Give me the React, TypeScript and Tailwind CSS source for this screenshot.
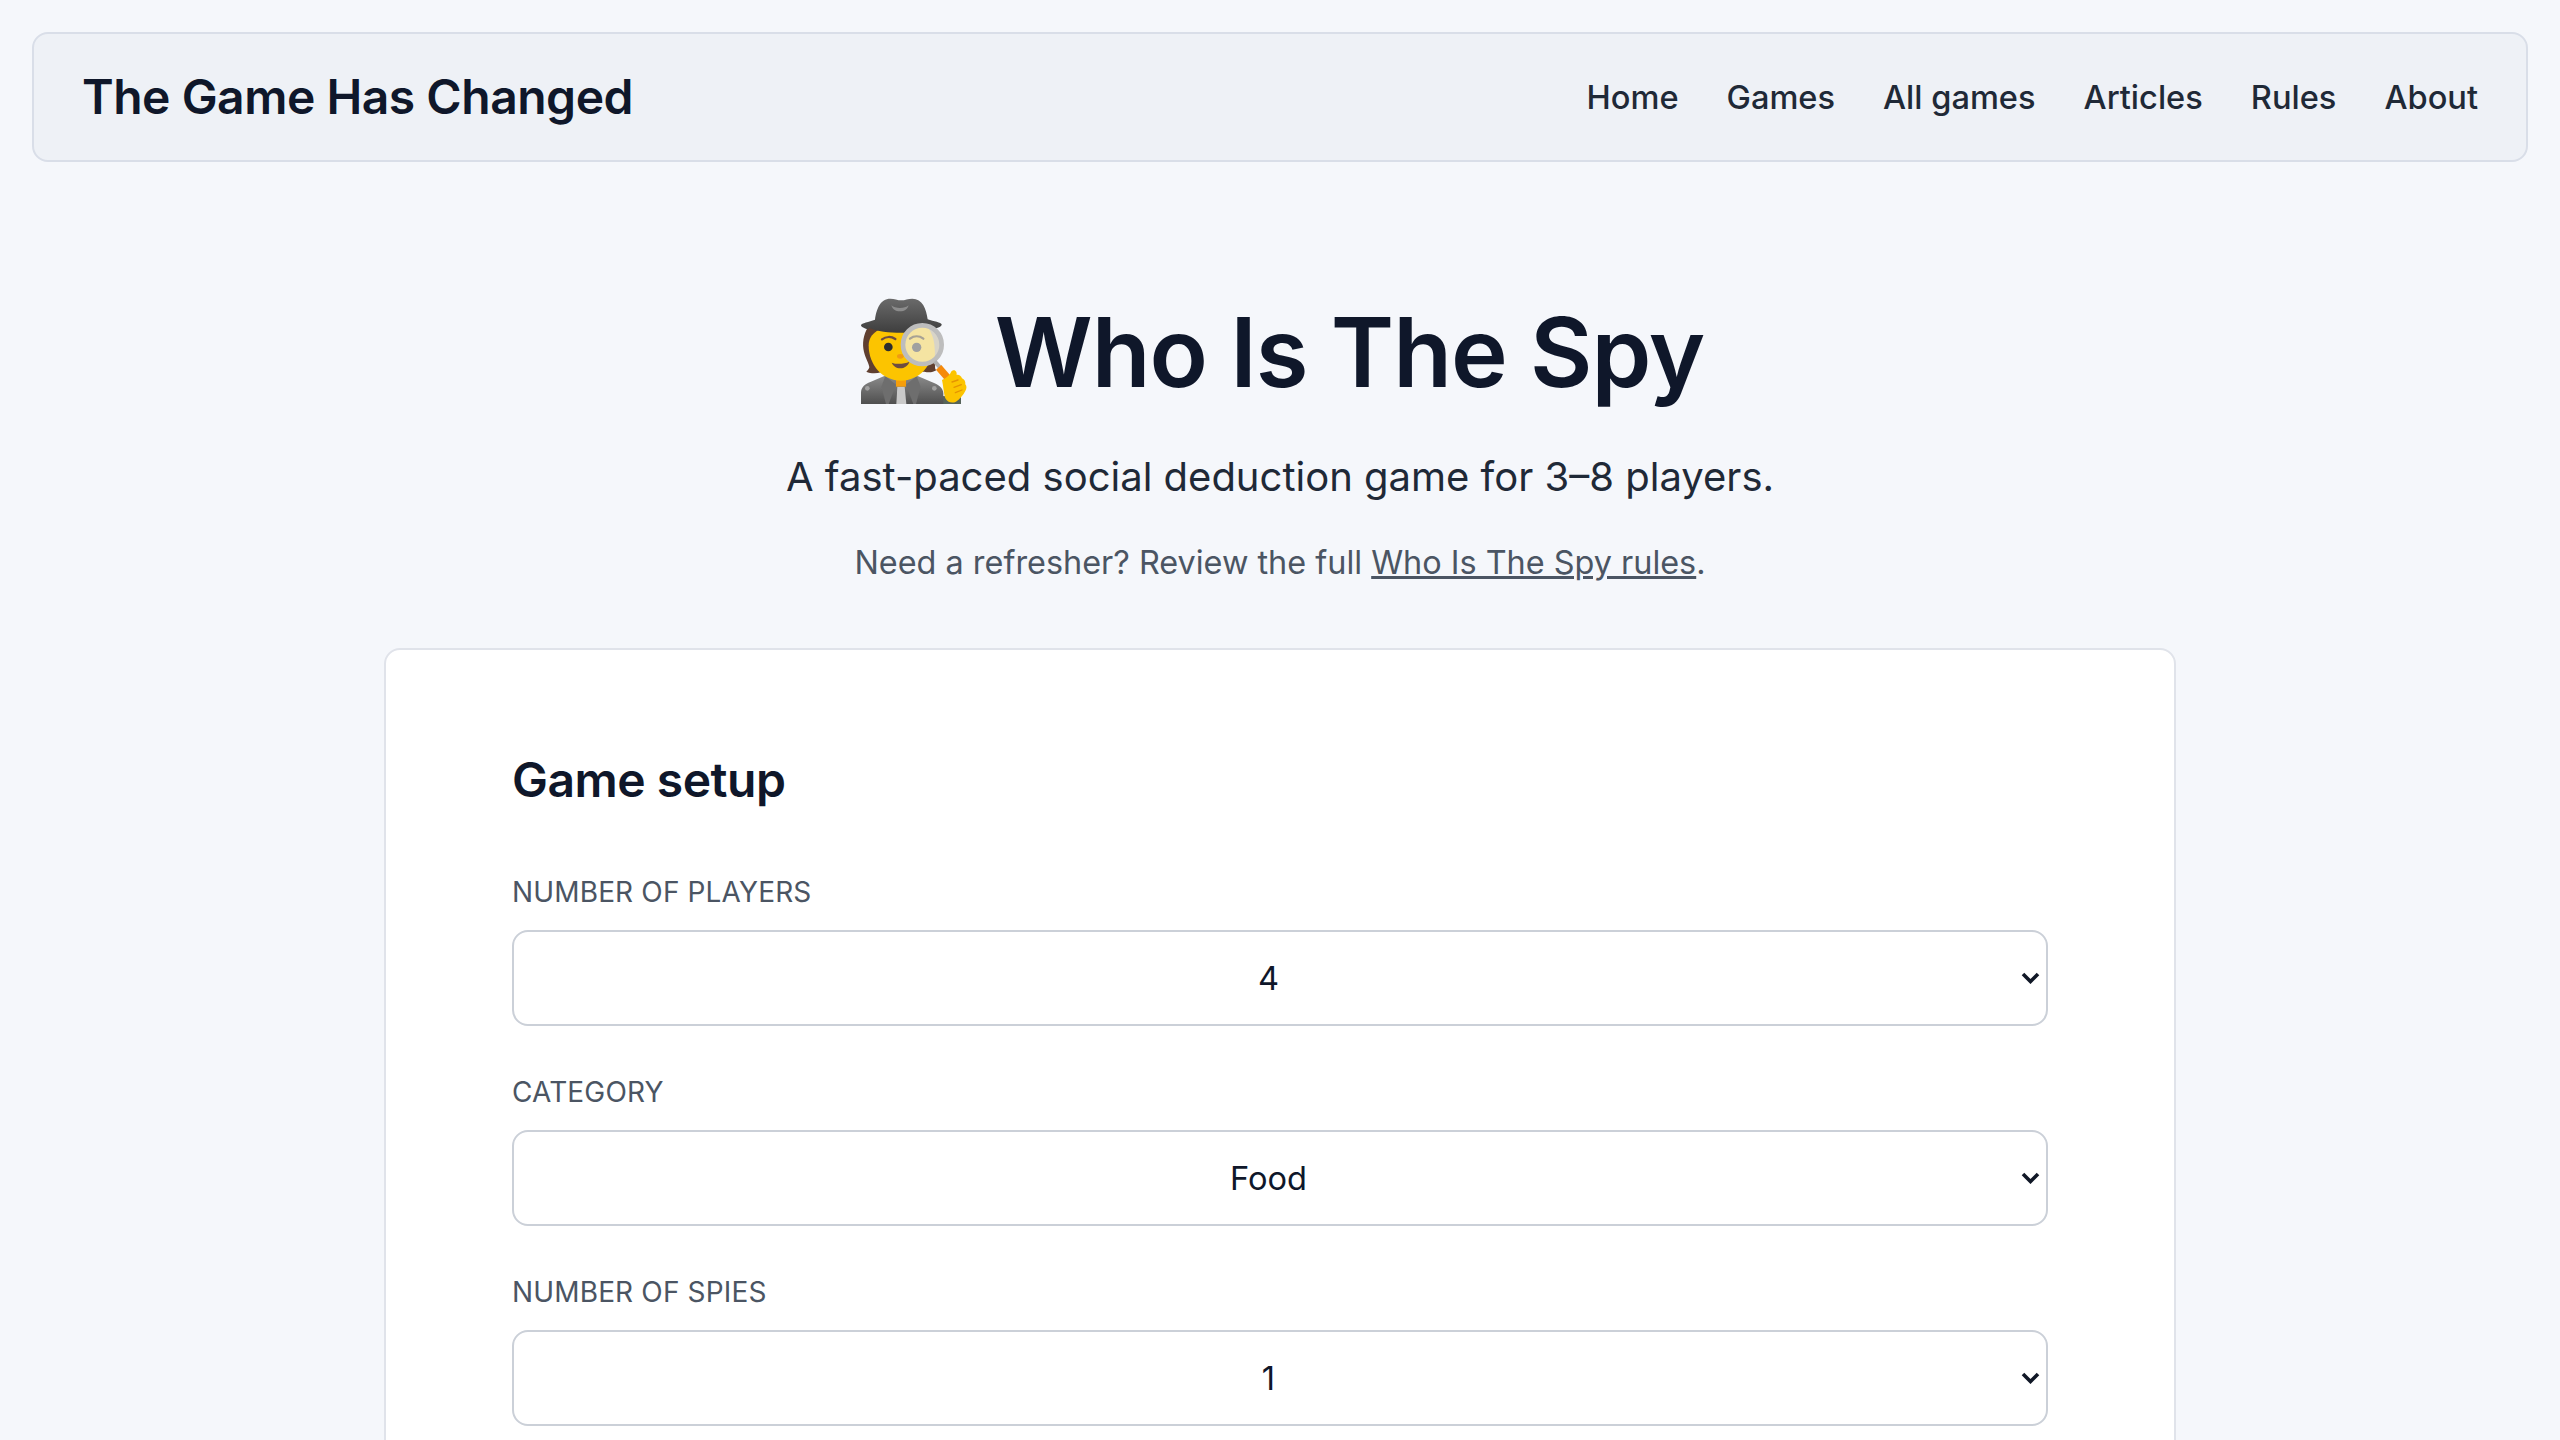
const navLinks = ["Home", "Games", "All games", "Articles", "Rules", "About"];

const fields = [
  { label: "Number of players", value: "4", options: ["3", "4", "5", "6", "7", "8"] },
  { label: "Category", value: "Food", options: ["Food", "Animals", "Places"] },
  { label: "Number of spies", value: "1", options: ["1", "2"] },
];

function SpyEmoji() {
  return (
    <svg viewBox="0 0 375 375" className="ml-[5px] mr-[20px] inline-block h-[125px] w-[125px] align-[-26px]">
      <defs>
        <linearGradient id="hat" x1="0" y1="0" x2="0" y2="1">
          <stop offset="0" stopColor="#6a6a6a" />
          <stop offset="1" stopColor="#3e3e3e" />
        </linearGradient>
        <linearGradient id="coat" x1="0" y1="0" x2="0" y2="1">
          <stop offset="0" stopColor="#8a8a8a" />
          <stop offset="1" stopColor="#4f4f4f" />
        </linearGradient>
        <clipPath id="lens">
          <circle cx="217" cy="170" r="56" />
        </clipPath>
      </defs>
      {/* sleeve behind the hand */}
      <path d="M278 348v-24l55 4v20z" fill="#56645a" />
      {/* coat */}
      <path d="M33 348v-34c0-16 12-26 28-32l42-18h100l42 18c20 7 35 18 35 34v32z" fill="url(#coat)" />
      <path d="M142 296h22l5 52h-30z" fill="#c9c9c9" />
      <path d="M138 276h30v20h-30z" fill="#f59e0b" />
      <path d="M106 264l32 26-22 58h-8l-14-52z" fill="#6e6e6e" />
      <path d="M200 264l-32 26 22 58h8l14-52z" fill="#6e6e6e" />
      <circle cx="52" cy="301" r="7" fill="#a0a0a0" />
      <circle cx="253" cy="301" r="7" fill="#a0a0a0" />
      {/* hair */}
      <path d="M54 118c-14 22-18 50-12 74 5 20 15 34 16 46-2 6-5 10-9 13 12 6 30 6 44 2l130-2c14 4 26 2 36-4-6-6-4-16 0-32l-2-96z" fill="#5f3f30" />
      {/* face */}
      <path d="M56 172c0-36 36-60 96-60s98 24 98 60c0 60-42 106-97 106S56 232 56 172z" fill="#fcc400" />
      {/* hat */}
      <path d="M56 124c-16-3-24-9-23-13 1-5 24-10 42-16 4-32 16-63 46-63 12 0 22 5 33 5s20-5 33-5c30 0 42 30 46 62 18 6 41 10 42 15 1 5-6 10-22 13-26 8-62 12-99 12s-72-3-98-15z" fill="url(#hat)" />
      <path d="M124 52c12 11 40 11 52 0-4 13-12 18-26 18s-22-5-26-18z" fill="#8c8c8c" />
      {/* features */}
      <path d="M96 154c12-9 28-9 40-1" fill="none" stroke="#6d4c41" strokeWidth="7" strokeLinecap="round" />
      <circle cx="115" cy="177" r="13" fill="#2e2e2e" />
      <ellipse cx="151" cy="205" rx="10" ry="7" fill="#f09a12" />
      <path d="M125 224c16 6 38 4 53-3-3 12-15 20-27 20s-22-8-26-17z" fill="#6d4c41" />
      {/* magnifier */}
      <g clipPath="url(#lens)">
        <rect x="155" y="110" width="125" height="120" fill="#f5e4a2" />
        <path d="M228 108h60v124h-40c6-18 8-30 6-50-1-30-10-50-26-74z" fill="#d8d4c8" />
        <path d="M180 152c12-9 28-9 40 0" fill="none" stroke="#a8a294" strokeWidth="7" strokeLinecap="round" />
        <circle cx="200" cy="178" r="14" fill="#a0a0a0" />
      </g>
      <circle cx="217" cy="170" r="58" fill="none" stroke="#bdbdbd" strokeWidth="14" />
      <path d="M254 220l16 18" stroke="#b0b0b0" strokeWidth="12" />
      <path d="M266 238l26 30" stroke="#f58a0b" strokeWidth="21" />
      {/* hand */}
      <path d="M276 276c10-4 18-10 24-18 3-5 4-10 10-11 8-1 11 7 10 14 6-2 13 2 16 10 7 3 11 10 10 18 5 6 4 14 0 20-6 12-16 24-28 32-12 6-26 2-32-10-4-10-6-36-10-55z" fill="#fcc400" />
      <path d="M306 282l18-6M312 298l22-8M316 314l20-8" stroke="#e59400" strokeWidth="4" strokeLinecap="round" fill="none" />
    </svg>
  );
}

export default function App() {
  return (
    <div className="h-screen overflow-hidden bg-[#f5f7fb] font-['Inter',sans-serif] text-[#0f172a]">
      <nav className="mx-8 mt-8 flex h-[130px] items-center justify-between rounded-2xl border-2 border-[#d9dee8] bg-[#eef1f6] px-12">
        <a className="text-[48px] font-semibold tracking-[-0.01em] text-[#0f172a]">The Game Has Changed</a>
        <ul className="flex gap-12">
          {navLinks.map((link) => (
            <li key={link} className="text-[32.6px] font-medium text-[#1f2937]">
              {link}
            </li>
          ))}
        </ul>
      </nav>

      <header className="mt-[126px] text-center">
        <h1 className="pr-[11px] text-[96px] font-semibold leading-[120px] tracking-[-0.01em] text-[#0f172a]">
          <SpyEmoji />
          Who Is The Spy
        </h1>
        <p className="mt-[34px] text-[40px] leading-[60px] text-[#1f2937]">
          A fast-paced social deduction game for 3–8 players.
        </p>
        <p className="mt-[32px] text-[32.4px] leading-[48px] text-[#4b5563]">
          Need a refresher? Review the full <a className="underline">Who Is The Spy rules</a>.
        </p>
      </header>

      <main className="mx-auto mt-[61px] min-h-[900px] w-[1792px] rounded-2xl border-2 border-[#e0e3ea] bg-white px-[126px] pt-[94px] pb-16">
        <h2 className="text-[48px] font-semibold leading-[72px] tracking-[-0.01em] text-[#0f172a]">Game setup</h2>
        <div className="mt-[55px] flex flex-col gap-[45px]">
          {fields.map((field) => (
            <div key={field.label}>
              <label className="mb-[17px] block text-[28px] uppercase leading-[42px] tracking-[0.15px] text-[#4b5563]">
                {field.label}
              </label>
              <div className="relative">
                <select
                  defaultValue={field.value}
                  className="h-[96px] w-full appearance-none rounded-2xl border-2 border-[#cbd0d8] bg-white pl-6 pr-[47px] text-center text-[32.6px] text-[#0f172a]"
                >
                  {field.options.map((o) => (
                    <option key={o}>{o}</option>
                  ))}
                </select>
                <svg
                  viewBox="0 0 19 12"
                  className="pointer-events-none absolute right-[8px] top-[42px] h-[12px] w-[19px]"
                >
                  <path d="M2 2l7.5 7.5L17 2" fill="none" stroke="#111827" strokeWidth="3.6" />
                </svg>
              </div>
            </div>
          ))}
        </div>
      </main>
    </div>
  );
}
